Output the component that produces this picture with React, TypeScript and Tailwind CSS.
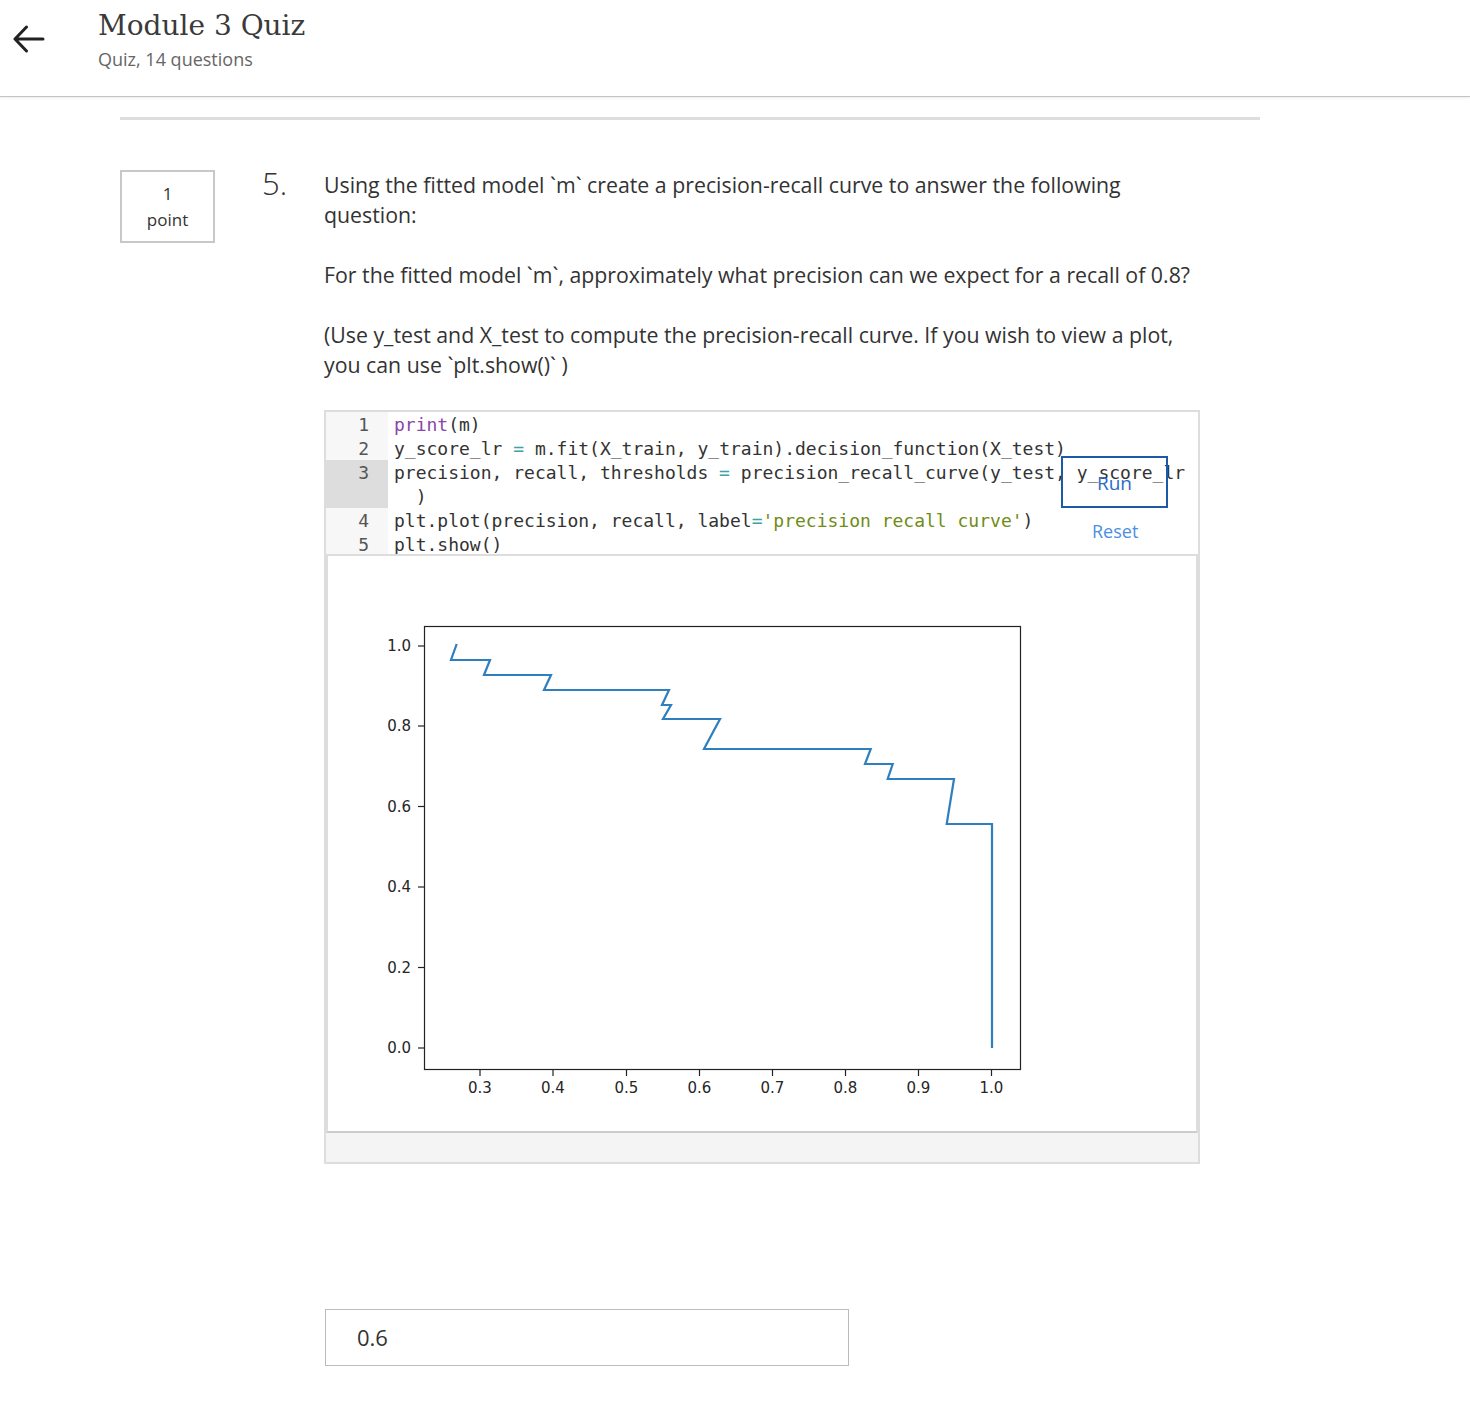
import React from "react";

const sans = { fontFamily: '"Open Sans", "Noto Sans", sans-serif' };
const mono = { fontFamily: '"DejaVu Sans Mono", "Liberation Mono", monospace' };

type Tok = { t: string; c?: string };
const P = "text-[#8a45a8]";
const OP = "text-[#3aa3a3]";
const STR = "text-[#6f8c14]";

const rows: { n: string; toks: Tok[]; hl?: boolean }[] = [
  { n: "1", toks: [{ t: "print", c: P }, { t: "(m)" }] },
  {
    n: "2",
    toks: [
      { t: "y_score_lr " },
      { t: "=", c: OP },
      { t: " m.fit(X_train, y_train).decision_function(X_test)" },
    ],
  },
  {
    n: "3",
    hl: true,
    toks: [
      { t: "precision, recall, thresholds " },
      { t: "=", c: OP },
      { t: " precision_recall_curve(y_test, y_score_lr" },
    ],
  },
  { n: "", hl: true, toks: [{ t: "  )" }] },
  {
    n: "4",
    toks: [
      { t: "plt.plot(precision, recall, label" },
      { t: "=", c: OP },
      { t: "'precision recall curve'", c: STR },
      { t: ")" },
    ],
  },
  { n: "5", toks: [{ t: "plt.show()" }] },
];

const curve: [number, number][] = [
  [456.7, 644],
  [451, 660],
  [490, 660],
  [484, 675],
  [551, 675],
  [544, 690],
  [669, 690],
  [662, 705],
  [671, 705],
  [663, 719],
  [720, 719],
  [704, 749],
  [870.7, 749],
  [865, 764],
  [892.7, 764],
  [887.7, 779],
  [954, 779],
  [946.7, 824],
  [992, 824],
  [992, 1048],
];

const yTicks = [
  { v: "1.0", y: 646 },
  { v: "0.8", y: 726 },
  { v: "0.6", y: 806.5 },
  { v: "0.4", y: 887 },
  { v: "0.2", y: 967.5 },
  { v: "0.0", y: 1048 },
];
const xTicks = [
  { v: "0.3", x: 480 },
  { v: "0.4", x: 553 },
  { v: "0.5", x: 626.5 },
  { v: "0.6", x: 699.5 },
  { v: "0.7", x: 772.5 },
  { v: "0.8", x: 845.5 },
  { v: "0.9", x: 918.5 },
  { v: "1.0", x: 991.5 },
];

function Plot() {
  const pts = curve.map((p) => p.join(",")).join(" ");
  return (
    <svg width="868" height="575" viewBox="328 556 868 575" className="block">
      <rect x="424.5" y="626.5" width="596" height="443" fill="none" stroke="#222" strokeWidth="1.2" />
      {yTicks.map((t) => (
        <g key={t.v}>
          <line x1="418" x2="424" y1={t.y} y2={t.y} stroke="#222" strokeWidth="1.2" />
          <text
            x="411"
            y={t.y + 5}
            textAnchor="end"
            fontSize="15"
            fill="#262626"
            style={{ fontFamily: '"DejaVu Sans", sans-serif' }}
          >
            {t.v}
          </text>
        </g>
      ))}
      {xTicks.map((t) => (
        <g key={t.v}>
          <line x1={t.x} x2={t.x} y1="1070" y2="1076" stroke="#222" strokeWidth="1.2" />
          <text
            x={t.x}
            y="1093"
            textAnchor="middle"
            fontSize="15"
            fill="#262626"
            style={{ fontFamily: '"DejaVu Sans", sans-serif' }}
          >
            {t.v}
          </text>
        </g>
      ))}
      <polyline points={pts} fill="none" stroke="#2f7fbf" strokeWidth="2.2" strokeLinejoin="miter" />
    </svg>
  );
}

export default function App() {
  return (
    <div className="min-h-[1414px] bg-white text-[#333]" style={sans}>
      <header className="h-[97px] border-b border-[#c4c4c4] shadow-[0_1px_2px_rgba(0,0,0,0.08)] flex">
        <div className="pl-[13px] pt-[24px] w-[98px]">
          <svg width="32" height="30" viewBox="0 0 32 30" fill="none" stroke="#222" strokeWidth="3" strokeLinecap="round" strokeLinejoin="round">
            <path d="M30 15H2.5M13.5 3L2 15l11.5 12" />
          </svg>
        </div>
        <div className="pt-[8px]">
          <div
            className="text-[28px] leading-[36px] text-[#3a3a3a]"
            style={{ fontFamily: '"DejaVu Serif", "Liberation Serif", serif' }}
          >
            Module 3 Quiz
          </div>
          <div className="text-[18px] leading-[24px] mt-[3px] text-[#666]">Quiz, 14 questions</div>
        </div>
      </header>

      <main className="ml-[120px] w-[1140px]">
        <div className="mt-[20px] h-[3px] bg-[#dedede]" />

        <div className="mt-[50px] flex">
          <div className="w-[95px] h-[73px] border-2 border-[#c8c8c8] flex flex-col items-center justify-center text-[17px] leading-[26px] text-[#333]">
            <span>1</span>
            <span>point</span>
          </div>
          <div className="ml-[47px] w-[62px] text-[31px] font-light leading-[30px] -mt-[2px] text-[#333]">5.</div>

          <div className="w-[876px]">
            <div className="text-[21.3px] leading-[30px] text-[#333] pr-[4px]">
              <p>
                Using the fitted model `m` create a precision-recall curve to answer the following question:
              </p>
              <p className="mt-[30px]">
                For the fitted model `m`, approximately what precision can we expect for a recall of 0.8?
              </p>
              <p className="mt-[30px]">
                (Use y_test and X_test to compute the precision-recall curve. If you wish to view a plot, you can use
                `plt.show()` )
              </p>
            </div>

            <div className="relative mt-[30px] border-2 border-[#dddddd] bg-white">
              <div className="h-[142px] overflow-hidden text-[18px] leading-[24px] text-[#333]" style={mono}>
                {rows.map((r, i) => (
                  <div key={i} className="flex h-[24px]">
                    <div
                      className={
                        "w-[62px] shrink-0 text-right pr-[19px] pt-[1px] text-[#555] " +
                        (r.hl ? "bg-[#dddddd]" : "bg-[#f7f7f7]")
                      }
                    >
                      {r.n}
                    </div>
                    <div className="pl-[6px] pt-[1px] whitespace-pre">
                      {r.toks.map((t, j) => (
                        <span key={j} className={t.c}>
                          {t.t}
                        </span>
                      ))}
                    </div>
                  </div>
                ))}
              </div>

              <div className="absolute left-[735px] top-[44px] w-[107px] h-[52px] border-2 border-[#1c5aa8] flex items-center justify-center text-[19px] text-[#2b6cc7] pt-[2px]">
                Run
              </div>
              <div className="absolute left-[766px] top-[107px] text-[18px] leading-[24px] text-[#4a90e2]">Reset</div>

              <div className="border-2 border-[#dddddd] border-b-[#cccccc] bg-white h-[579px] overflow-hidden">
                <Plot />
              </div>
              <div className="h-[29px] bg-[#f4f4f4]" />
            </div>

            <div className="mt-[145px] ml-[1px] w-[524px] h-[57px] border border-[#bbbbbb] flex items-center pl-[31px] text-[22px] text-[#333]">
              0.6
            </div>
          </div>
        </div>
      </main>
    </div>
  );
}
